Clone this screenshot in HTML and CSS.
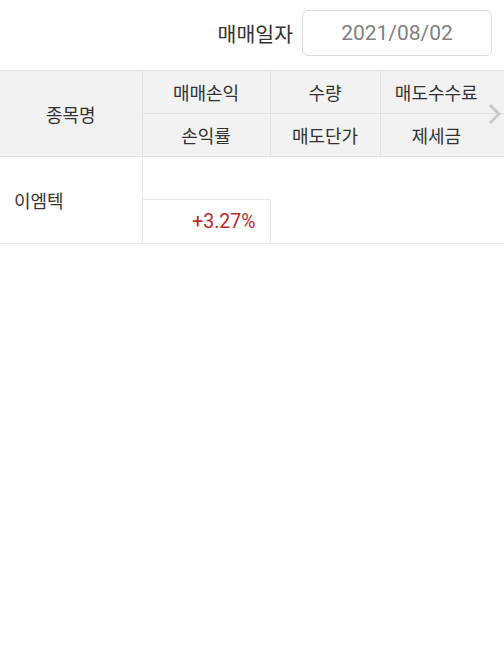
FILE: index.html
```html
<!DOCTYPE html>
<html lang="ko">
<head>
  <meta charset="UTF-8">
  <meta name="viewport" content="width=device-width, initial-scale=1.0">
  <title>매매일지</title>
  <link rel="stylesheet" href="styles.css">
</head>
<body>
  <div class="date-bar">
    <span class="date-label">매매일자</span>
    <div class="date-box">2021/08/02</div>
  </div>

  <div class="table-wrap">
    <table class="trade-table">
      <colgroup>
        <col class="c-name">
        <col class="c-profit">
        <col class="c-qty">
        <col class="c-fee">
      </colgroup>
      <thead>
        <tr>
          <th rowspan="2" class="name-head">종목명</th>
          <th>매매손익</th>
          <th>수량</th>
          <th class="last">매도수수료</th>
        </tr>
        <tr>
          <th>손익률</th>
          <th>매도단가</th>
          <th class="last">제세금</th>
        </tr>
      </thead>
      <tbody>
        <tr class="first-line">
          <td rowspan="2" class="stock">이엠텍</td>
          <td class="num"></td>
          <td></td>
          <td></td>
        </tr>
        <tr class="second-line">
          <td class="num rate up">+3.27%</td>
          <td></td>
          <td></td>
        </tr>
      </tbody>
    </table>
    <span class="more">
      <svg width="14" height="22" viewBox="0 0 14 22"><path d="M2 2 L11 11 L2 20" fill="none" stroke="#c8c8c8" stroke-width="3"/></svg>
    </span>
  </div>
</body>
</html>
```

FILE: styles.css
```css
body {
  margin: 0;
  background: #fff;
  font-family: Roboto, "Noto Sans CJK KR", sans-serif;
  color: #333;
}
.date-bar {
  display: flex;
  justify-content: flex-end;
  align-items: center;
  padding: 10px 12px 0 0;
}
.date-label {
  font-size: 20.5px;
  margin-right: 9px;
}
.date-box {
  width: 188px;
  height: 44px;
  border: 1px solid #dcdcdc;
  border-radius: 6px;
  display: flex;
  align-items: center;
  justify-content: center;
  font-size: 21px;
  color: #808080;
}
.table-wrap {
  position: relative;
  margin-top: 14px;
  overflow: hidden;
}
.trade-table {
  border-collapse: collapse;
  table-layout: fixed;
  width: 504px;
}
.c-name { width: 142px; }
.c-profit { width: 128px; }
.c-qty { width: 110px; }
.c-fee { width: 124px; }
.trade-table th {
  background: #f2f2f2;
  font-weight: normal;
  font-size: 18px;
  height: 42px;
  padding: 0;
  border: 1px solid #e2e2e2;
  text-align: center;
}
.trade-table th:first-child { border-left: none; }
.trade-table th.last {
  border-right: none;
  padding-right: 12px;
}
.trade-table td {
  height: 42px;
  padding: 0 14px;
  font-size: 18px;
}
.stock {
  border-right: 1px solid #e6e6e6;
  border-bottom: 1px solid #e6e6e6;
}
.second-line td {
  height: 43px;
  border-bottom: 1px solid #e6e6e6;
}
.rate {
  text-align: right;
  font-size: 19.5px !important;
  border-top: 1px solid #e6e6e6;
  border-right: 1px solid #e6e6e6;
}
.up { color: #c0262c; }
.more {
  position: absolute;
  right: 2px;
  top: 33px;
  line-height: 0;
}
```
